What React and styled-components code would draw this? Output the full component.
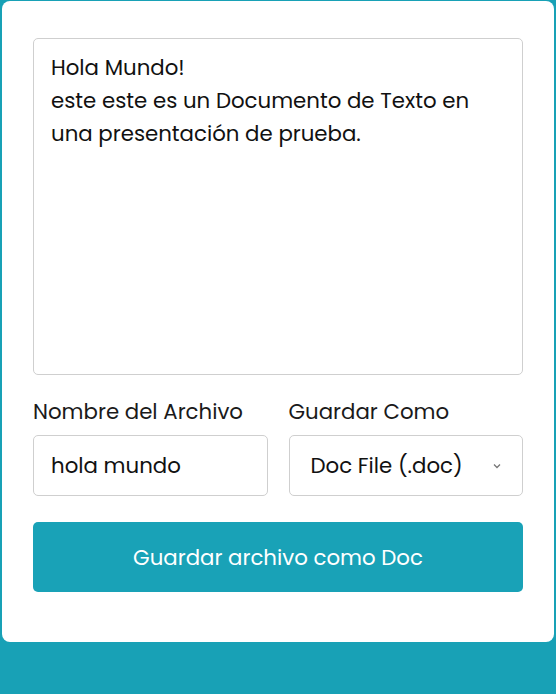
import styled, { createGlobalStyle } from 'styled-components';

const GlobalStyle = createGlobalStyle`
  html, body {
    margin: 0;
    padding: 0;
    background: #18a1b6;
  }
  body {
    font-family: 'Poppins', 'Noto Sans', 'Open Sans', sans-serif;
    color: #111;
  }
`;

const Page = styled.div`
  padding: 1px 2px 52px 2px;
`;

const Card = styled.div`
  background: #ffffff;
  border-radius: 8px;
  padding: 37px 31px 50px 31px;
`;

const TextArea = styled.textarea`
  display: block;
  box-sizing: border-box;
  width: 100%;
  height: 337px;
  border: 1px solid #cfcfcf;
  border-radius: 5px;
  padding: 12px 17px;
  font-family: inherit;
  font-size: 21.3px;
  line-height: 33px;
  color: #111;
  resize: none;
  outline: none;
`;

const Fields = styled.div`
  display: grid;
  grid-template-columns: 1fr 1fr;
  column-gap: 21px;
  margin-top: 23px;
`;

const Field = styled.div`
  display: flex;
  flex-direction: column;
`;

const Label = styled.label`
  font-size: 21.3px;
  line-height: 28px;
  margin-bottom: 9px;
  color: #1a1a1a;
`;

const Input = styled.input`
  box-sizing: border-box;
  height: 61px;
  width: 100%;
  border: 1px solid #cfcfcf;
  border-radius: 5px;
  padding: 0 17px;
  font-family: inherit;
  font-size: 21.3px;
  color: #111;
  outline: none;
`;

const SelectBox = styled.div`
  position: relative;
  box-sizing: border-box;
  height: 61px;
  border: 1px solid #cfcfcf;
  border-radius: 5px;
  display: flex;
  align-items: center;
  padding: 0 21px;
  font-size: 21.3px;
  color: #111;
`;

const Chevron = styled.svg`
  position: absolute;
  right: 20px;
  top: 50%;
  transform: translateY(-50%);
`;

const SaveButton = styled.button`
  display: block;
  width: 100%;
  height: 70px;
  margin-top: 26px;
  border: none;
  border-radius: 5px;
  background: #19a2b7;
  color: #ffffff;
  font-family: inherit;
  font-size: 21.3px;
  cursor: pointer;
`;

const App = () => {
  return (
    <>
      <GlobalStyle />
      <Page>
        <Card>
          <TextArea
            defaultValue={'Hola Mundo!\neste este es un Documento de Texto en una presentación de prueba.'}
          />
          <Fields>
            <Field>
              <Label>Nombre del Archivo</Label>
              <Input defaultValue="hola mundo" />
            </Field>
            <Field>
              <Label>Guardar Como</Label>
              <SelectBox>
                Doc File (.doc)
                <Chevron width="10" height="8" viewBox="0 0 10 8">
                  <path d="M2 2.5 L5 5.5 L8 2.5" fill="none" stroke="#777" strokeWidth="1.3" />
                </Chevron>
              </SelectBox>
            </Field>
          </Fields>
          <SaveButton>Guardar archivo como Doc</SaveButton>
        </Card>
      </Page>
    </>
  );
};

export default App;
